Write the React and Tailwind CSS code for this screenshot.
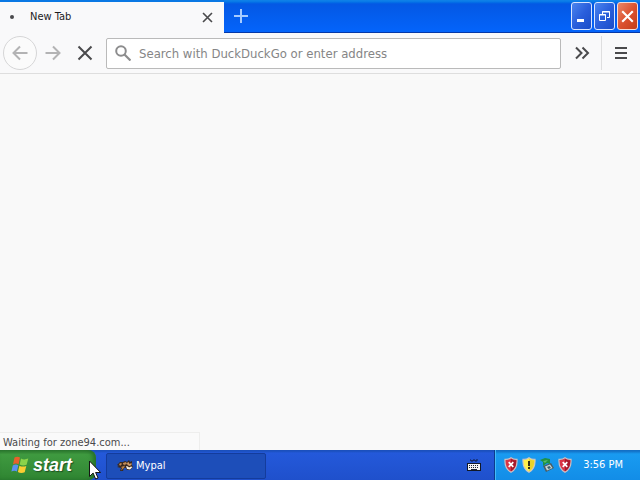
import React from "react";

function Cross({ className, width = 2 }) {
  return (
    <svg viewBox="0 0 16 16" className={className} fill="none" stroke="currentColor" strokeWidth={width} aria-hidden="true">
      <path d="M1.5 1.5 14.5 14.5M14.5 1.5 1.5 14.5" />
    </svg>
  );
}

function Arrow({ className }) {
  return (
    <svg viewBox="0 0 16 16" className={className} fill="none" stroke="currentColor" strokeWidth="2" aria-hidden="true">
      <path d="M15.5 8H1.5M8 1.5 1.5 8 8 14.5" />
    </svg>
  );
}

function Shield({ fill, dark, children }) {
  return (
    <svg viewBox="0 0 14 16" className="h-4 w-3.5" aria-hidden="true">
      <path d="M7 .8C5 2.2 3 2.6 1 2.4.6 8 2 12.500 7 15.300 12 12.500 13.400 8 13 2.400 11 2.600 9 2.200 7 .8Z" fill={fill} stroke="#c9c3c6" strokeWidth="1.200" />
      <path d="M7 1.800v12.400C11 12 12.400 8 12.200 3.300 10.500 3.400 8.500 3 7 1.800Z" fill={dark} />
      {children}
    </svg>
  );
}

function RedShield() {
  return (
    <Shield fill="#d93445" dark="#a81a2c">
      <path d="m4.700 5.200 4.600 4.600m0-4.600L4.700 9.800" stroke="#fff" strokeWidth="1.700" />
    </Shield>
  );
}

function TitleBar() {
  return (
    <header className="flex h-[33px] shrink-0">
      <div className="flex w-56 shrink-0 flex-col border-t-2 border-[#0a78e4] bg-[#f9f9fa] pt-[3px]">
        <div className="flex h-6 items-center pr-[11px] pl-2.5 text-[11px] text-[#1c1c1e]">
          <span className="mr-4 size-1 rounded-full bg-[#4a4a4c]" />
          <span className="flex-1 pt-px">New Tab</span>
          <button aria-label="Close tab" className="flex size-3 items-center justify-center text-[#4a4a4c]">
            <Cross className="size-[11px]" width={2.4} />
          </button>
        </div>
      </div>
      <div className="flex flex-1 items-start border-b border-[#0538a8] bg-linear-to-b from-[#0e80e8] from-[1px] via-[#0458e4] via-[4px] to-[#0464fb]">
        <button aria-label="New tab" className="mt-2 ml-[9px] flex size-4 items-center justify-center text-[#a6cbff]">
          <svg viewBox="0 0 14 14" className="size-3.5" fill="none" stroke="currentColor" strokeWidth="2" aria-hidden="true">
            <path d="M7 0v14M0 7h14" />
          </svg>
        </button>
        <div className="mt-0.5 mr-0.5 ml-auto flex gap-[2px]">
          <button aria-label="Minimize" className="flex h-7 w-[21px] items-center justify-center rounded-[3px] border border-[#d8e5ff] bg-linear-to-br from-[#4b84ee] via-[#2a5fdc] to-[#1a4cc8] text-white">
            <svg viewBox="0 0 13 13" className="size-[13px] shrink-0" aria-hidden="true"><path d="M2 9h7v3H2z" fill="currentColor" /></svg>
          </button>
          <button aria-label="Restore" className="flex h-7 w-[21px] items-center justify-center rounded-[3px] border border-[#d8e5ff] bg-linear-to-br from-[#4b84ee] via-[#2a5fdc] to-[#1a4cc8] text-white">
            <svg viewBox="0 0 13 13" className="size-[13px] shrink-0" fill="none" stroke="currentColor" aria-hidden="true">
              <path d="M4.500 4V1.500h7v6H9" /><path d="M4 2h8" />
              <path d="M1.500 4.500h6v6h-6zM1 5h7" />
            </svg>
          </button>
          <button aria-label="Close" className="flex h-7 w-[21px] items-center justify-center rounded-[3px] border border-[#f3dcd8] bg-linear-to-br from-[#e98666] via-[#dc5230] to-[#c23c18] text-white">
            <Cross className="size-[13px] shrink-0" width={2.6} />
          </button>
        </div>
      </div>
    </header>
  );
}

function Toolbar() {
  return (
    <nav className="flex h-[41px] shrink-0 items-center border-b border-[#dedede] bg-[#f9f9fa] pl-[3px] text-[#4a4a4c]">
      <button aria-label="Back" className="flex size-[34px] shrink-0 items-center justify-center rounded-full border border-[#d6d6d7] bg-[#fbfbfb] text-[#b3b3b4]">
        <Arrow className="size-4" />
      </button>
      <button aria-label="Forward" className="ml-2 flex size-4 shrink-0 items-center justify-center text-[#b3b3b4]">
        <Arrow className="size-4 rotate-180" />
      </button>
      <button aria-label="Stop" className="mr-[13px] ml-4 flex size-4 shrink-0 items-center justify-center">
        <Cross className="size-4" />
      </button>
      <label className="flex h-[31px] min-w-0 flex-1 items-center gap-2 rounded-[2px] border border-[#bababa] bg-white pl-2">
        <svg viewBox="0 0 16 16" className="size-4 shrink-0 text-[#8c8c8d]" fill="none" stroke="currentColor" strokeWidth="2" aria-hidden="true">
          <circle cx="6" cy="6" r="4.800" /><path d="m9.500 9.500 6 6" strokeWidth="2.200" />
        </svg>
        <input aria-label="Address" placeholder="Search with DuckDuckGo or enter address" className="min-w-0 flex-1 bg-transparent pt-px text-[13px] outline-none placeholder:text-[#858586]" />
      </label>
      <button aria-label="More tools" className="mr-[11px] ml-[13px] flex size-4 shrink-0 items-center justify-center">
        <svg viewBox="0 0 16 16" className="size-4" fill="none" stroke="currentColor" strokeWidth="2" aria-hidden="true">
          <path d="m2 2.500 5.500 5.500L2 13.500M8.500 2.500 14 8l-5.500 5.500" />
        </svg>
      </button>
      <div className="flex h-[34px] w-[39px] shrink-0 items-center justify-center border-l border-[#dededf]">
        <button aria-label="Open menu">
          <svg viewBox="0 0 12 12" className="size-3" aria-hidden="true"><path d="M0 0h12v2H0zM0 5h12v2H0zM0 10h12v2H0z" fill="currentColor" /></svg>
        </button>
      </div>
    </nav>
  );
}

function Flag() {
  return (
    <svg viewBox="0 0 18 18" className="h-[18px] w-[18px]" aria-hidden="true">
      <path d="M3.500 1.500C5.500.3 7.300.4 9 1.500L7.600 8.200C5.900 7.200 4.100 7.200 2 8.400Z" fill="#e8602c" />
      <path d="M10 2.500c2 1.100 4 1.200 7.300.1l-1.700 6.200c-2.300 1-4.800.9-6.900-.2Z" fill="#8bd34a" />
      <path d="M1.800 9.400c2-1.200 3.800-1.200 5.500-.2L5.900 15.500c-1.700-1-3.500-1-5.500.1Z" fill="#5a91f2" />
      <path d="M8.400 9.700c2.100 1.100 4.600 1.200 6.900.2l-1.600 6.400c-2.300 1-4.800.9-6.800-.2Z" fill="#fbcd32" />
    </svg>
  );
}

function Raccoon() {
  return (
    <svg viewBox="0 0 16 14" className="h-3.5 w-4 shrink-0" aria-hidden="true">
      <path d="m0 6 3-3 3 0 2-1 2 1 2-2 1 2 2-1 0 4 1 2-3 3-3 0-1-2-2 0-1 3-3 0 1-3-4-1 2-1Z" fill="#38281f" />
      <path d="m2 5 2-1 1 1-2 2ZM6 4l3-1 1 2-3 1-1-1Z" fill="#c08a54" />
      <path d="M4 8 8 6.500 7 9 4 11.500 5 9Z" fill="#b07c4a" />
      <path d="m10 4 1.500-1 1 2 2-1 0 2-2 1-2-1Z" fill="#cf9d6c" />
      <path d="m9 7 2 .5 1 1 2-1 1.500.500-2.500 2.500L10 10Z" fill="#f8efe0" />
    </svg>
  );
}

function Taskbar() {
  return (
    <footer className="flex h-[30px] shrink-0 bg-linear-to-b from-[#1b50bd] from-[1px] via-[#2459da] via-[3px] to-[#1f50cc] text-[11px] text-white">
      <button className="flex w-24 shrink-0 items-center gap-1 rounded-r-[8px] bg-linear-to-b from-[#2d7930] via-[#3f9a40] via-15% to-[#2f8532] pl-[11px] shadow-[inset_-3px_0_4px_#256f2b]">
        <Flag />
        <span className="font-['Liberation_Sans',sans-serif] text-[18px] leading-5 font-bold italic [text-shadow:1px_1px_1px_#1d5021]">start</span>
      </button>
      <button className="mt-[3px] ml-2.5 flex h-[26px] w-40 items-center gap-[3px] rounded-[2px] border border-[#143c9c] bg-[#1d4eb9] pl-2.5">
        <Raccoon />
        <span className="pt-px">Mypal</span>
      </button>
      <button aria-label="On-screen keyboard" className="mr-[13px] ml-auto">
        <svg viewBox="0 0 14 14" className="size-3.5" aria-hidden="true">
          <path d="M3 2h1v1h2V2h2v1h2V1" fill="none" stroke="#111c42" />
          <path d="M0 5h14v8H0z" fill="#111827" />
          <path d="M1 6h12v6H1z" fill="#f3f3f3" />
          <path d="M2 7.500h10M2 9.500h10" stroke="#1b2336" strokeDasharray="1 1" />
          <path d="M4 11.500h6" stroke="#1b2336" />
        </svg>
      </button>
      <div className="flex w-[146px] shrink-0 items-center gap-1 border-l border-[#0c3b8c] bg-linear-to-b from-[#1370c6] from-[1px] via-[#199bf1] via-[4px] to-[#128de7] pl-[9px] shadow-[inset_1px_0_0_#45bbf8]">
        <RedShield />
        <Shield fill="#fff04b" dark="#e9d32a"><path d="M6 4h2v5H6zM6 10h2v2H6z" fill="#343016" /></Shield>
        <svg viewBox="0 0 14 16" className="h-4 w-3.5" aria-hidden="true">
          <path d="m3 9 8-3 3 5-8 4Z" fill="#4b5d64" />
          <path d="m5 9.500 5-2 2.500 3.500-5.500 2.500Z" fill="#c6d4d2" />
          <path d="m7 10 2.500-1 1.500 2-2.500 1Z" fill="#3a6170" />
          <path d="M0 3 5 1l5 1 0 5-3-1-4 3 0-4Z" fill="#1f9145" />
          <path d="m3 4 5-1-3 3Z" fill="#56bd68" />
        </svg>
        <RedShield />
        <time className="mr-[17px] ml-auto pt-px">3:56 PM</time>
      </div>
    </footer>
  );
}

export default function App() {
  return (
    <div className="relative flex h-screen flex-col overflow-hidden bg-[#f9f9fa] font-['DejaVu_Sans_Condensed','Noto_Sans',sans-serif]">
      <TitleBar />
      <Toolbar />
      <main className="relative flex-1 bg-[#f9f9f9]">
        <div role="status" className="absolute bottom-0 left-0 flex h-[18px] w-[200px] items-center border-t border-r border-[#eeeeed] bg-[#fafafa] pt-0.5 pl-[3px] text-[11px] leading-4 text-[#4a4a4c]">
          Waiting for zone94.com...
        </div>
      </main>
      <Taskbar />
      <svg viewBox="0 0 12 20" className="pointer-events-none absolute bottom-0 left-[89px] h-5 w-3" aria-hidden="true">
        <path d="M.5 1v15.500l3.600-3.500 2.500 6 2.500-1-2.500-5.500h5Z" fill="#fff" stroke="#151515" />
      </svg>
    </div>
  );
}
